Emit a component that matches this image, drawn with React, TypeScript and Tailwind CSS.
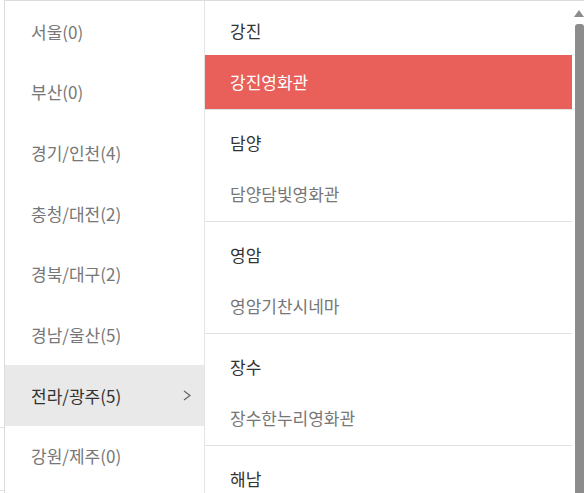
import React from "react";

const regions = [
  { name: "서울(0)" },
  { name: "부산(0)" },
  { name: "경기/인천(4)" },
  { name: "충청/대전(2)" },
  { name: "경북/대구(2)" },
  { name: "경남/울산(5)" },
  { name: "전라/광주(5)", active: true },
  { name: "강원/제주(0)" },
];

const groups = [
  { city: "강진", theaters: ["강진영화관"] },
  { city: "담양", theaters: ["담양담빛영화관"] },
  { city: "영암", theaters: ["영암기찬시네마"] },
  { city: "장수", theaters: ["장수한누리영화관"] },
  { city: "해남", theaters: ["해남문화예술회관"] },
];

export default function App() {
  return (
    <div
      className="w-[584px] h-[493px] bg-white overflow-hidden relative"
      style={{ fontFamily: '"Noto Sans CJK KR", "Noto Sans", sans-serif' }}
    >
      {/* 바깥 페이지 선 */}
      <div className="absolute left-0 top-[427px] w-[4px] h-px bg-[#e2e2e2]" />
      <div className="absolute left-0 top-[490px] w-[4px] h-px bg-[#e2e2e2]" />

      <div className="ml-[4px] h-full flex border-t border-l border-[#dcdcdc]">
        {/* 지역 목록 */}
        <ul className="w-[200px] shrink-0 border-r border-[#e4e4e4]">
          {regions.map((r) => (
            <li
              key={r.name}
              className={`h-[60.67px] flex items-center justify-between pl-[26px] pr-[13px] text-[17px] ${
                r.active ? "bg-[#e9e9e9] text-[#333]" : "text-[#777]"
              }`}
            >
              <span>{r.name}</span>
              {r.active && (
                <svg width="8" height="11" viewBox="0 0 8 11">
                  <polyline
                    points="1,1 7,5.5 1,10"
                    fill="none"
                    stroke="#666"
                    strokeWidth="1.3"
                  />
                </svg>
              )}
            </li>
          ))}
        </ul>

        {/* 영화관 목록 */}
        <div className="flex-1 overflow-hidden">
          <div className="mt-[-3px]">
            {groups.map((g, gi) => (
              <div key={g.city} className="border-b border-[#e2e2e2]">
                <div className="h-[57px] pt-[21px] pl-[25px] text-[17px] leading-[24px] text-[#333]">
                  {g.city}
                </div>
                {g.theaters.map((t) => (
                  <div
                    key={t}
                    className={`h-[54px] flex items-center pl-[25px] text-[17px] ${
                      gi === 0 ? "bg-[#e9605a] text-white" : "text-[#777]"
                    }`}
                  >
                    {t}
                  </div>
                ))}
              </div>
            ))}
          </div>
        </div>

        {/* 스크롤바 */}
        <div className="w-[12px] shrink-0 flex flex-col items-end">
          <svg width="10" height="8" viewBox="0 0 10 8" className="mt-[9px]">
            <polygon points="5,0 10,7 0,7" fill="#8c8c8c" />
          </svg>
          <div className="mt-[6px] w-[9px] flex-1 bg-[#8c8c8c] rounded-t-[3px]" />
        </div>
      </div>
    </div>
  );
}
